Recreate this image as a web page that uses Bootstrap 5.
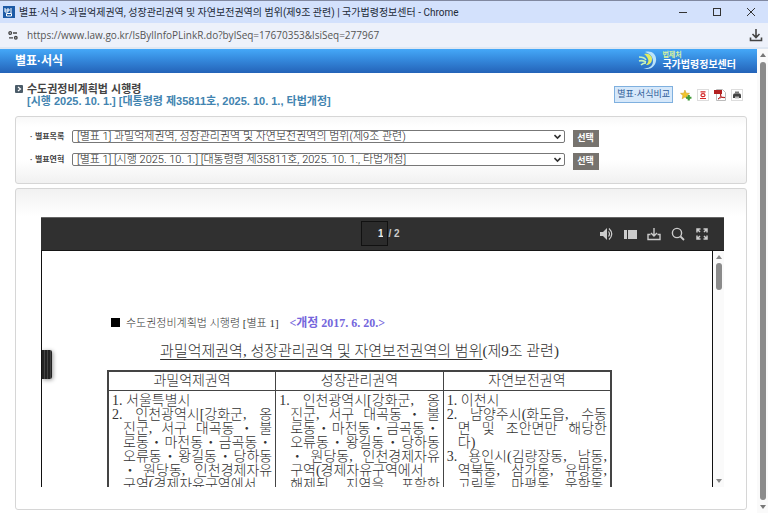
<!DOCTYPE html>
<html lang="ko">
<head>
<meta charset="utf-8">
<meta name="viewport" content="width=device-width, initial-scale=1">
<title>별표·서식 | 국가법령정보센터</title>
<link href="https://cdn.jsdelivr.net/npm/bootstrap@5.3.0/dist/css/bootstrap.min.css" rel="stylesheet">
<style>
body{font-family:"Liberation Sans","Noto Sans CJK KR",sans-serif;font-size:11px;color:#444}
svg{display:block;flex:none}
.titlebar{height:23px;background:#d3e1fc;border-top:1px solid #8088a0;color:#222a38;font-family:Roboto,"Noto Sans CJK KR",sans-serif;font-size:10px;padding:0 13px 0 3px}
.window-tools{gap:26px}
.addressbar{height:26px;background:#edf1fa;padding:0 5px 0 4px;border-bottom:2px solid #dfe7f2;font-family:"Open Sans","Noto Sans CJK KR",sans-serif}
.addressbar input{font-size:10px;color:#555;background:none;border:0;padding:0;outline:0}
.site-btn{width:18px;height:18px;border-radius:50%;background:#fff;margin-right:5px}
.plain{border:0;background:none;padding:0;line-height:1}
.masthead{height:26px;background:linear-gradient(#45a8f8,#3385d9 50%,#2463b8);padding:0 21px 0 15px;color:#fff}
.masthead h1{font-size:12px;font-weight:700}
.agency{font-size:7px;line-height:8px;color:#d9f3a0;font-weight:700}
.center-name{font-size:10px;line-height:11px;font-weight:700}
.law-head{padding:8px 0 7px}
.law-head h2{font-size:11px;line-height:12px;font-weight:700;color:#444;padding-top:2px}
.law-head p{font-size:11px;line-height:12px;font-weight:700;color:#4284b0;padding-bottom:2px}
.law-tools{gap:5px}
.main-pane{padding:0 10px 3px 15px}
.compare{font-size:9px;line-height:15px;border:1px solid #7fb0df;background:#d6e8fa;color:#2f5d98;padding:0 2px;margin-right:2px}
.panel{border:1px solid #d6d6d6;border-radius:3px}
.panel-form{background:linear-gradient(#f8f8f8,#fff 15%,#fff 65%,#f1f1f1);padding:13px 14px;margin-bottom:4px}
.panel-view{background:linear-gradient(#f1f1f1,#fff 28px);padding:28px 22px 22px 25px}
.pick{width:81%;gap:8px}
.pick + .pick{margin-top:6px}
.pick label{font-size:8px;line-height:13px;font-weight:700;width:34px;white-space:nowrap}
.pick select{height:13px;min-height:0;padding:0 16px 0 4px;font-family:Roboto,"Noto Sans CJK KR",sans-serif;font-size:11px;font-weight:300;line-height:11px;color:#222;border:1px solid #777;border-radius:2px;background-position:right 3px center;background-size:7px 7px;background-image:url("data:image/svg+xml,%3Csvg xmlns='http://www.w3.org/2000/svg' viewBox='0 0 7 7'%3E%3Cpath d='M.5 2l3 3 3-3' fill='none' stroke='%23333' stroke-width='1.6'/%3E%3C/svg%3E")}
.pick button{font-size:9px;line-height:17px;font-weight:700;background:#77736e;color:#fff;width:26px}
.toolbar{flex:none;height:34px;grid-template-columns:1fr auto 1fr;background:#303030;border-top:1px solid #666;border-bottom:1px solid #161616;color:#ccc;padding-right:15px}
.toolbar .tools{gap:10px}
.pager{font-size:10px;font-weight:700;padding-left:11px}
.pager input{width:27px;height:25px;background:#2b2b2b;border:1px solid #111;color:#eee;text-align:right;padding:0 4px 0 0;font-size:10px;font-weight:700}
.paper{border-left:1px solid #111;border-right:1px solid #111;padding:64px 100px 0 65px;font-family:"Liberation Serif","Noto Sans CJK KR",serif;color:#333;font-weight:300}
.grip{position:absolute;left:0;top:99px;width:10px;height:29px;border-radius:0 2px 2px 0;background:repeating-linear-gradient(90deg,#222 0 2px,#444 2px 3px);box-shadow:1px 1px 4px #999}
.notice{font-size:11px;line-height:16px;margin:0 0 10px 4px}
.notice b{color:#7566dc;font-size:12px;font-weight:700;margin-left:8px}
.square{width:9px;height:9px;background:#000;margin-right:6px}
.doc-title{font-size:15px;line-height:20px;font-weight:300;margin-bottom:9px;white-space:nowrap}
.doc-title u{text-underline-offset:3px;text-decoration-thickness:1px}
.zones{table-layout:fixed;width:100%;border:2px solid #444;font-size:14px;line-height:14px}
.zones th{font-weight:300;text-align:center;line-height:18px;border:1px solid #444;padding:0}
.zones td{vertical-align:top;border:1px solid #444;padding:3px 3px 40px}
.zones div{white-space:nowrap;text-align:justify;text-align-last:justify;margin-left:11px}
.zones .item{margin-left:0}
.zones .short{text-align-last:left}
.bar{flex:none;width:11px;background:#fafafa;padding:4px 0}
.thumb{width:6px;border-radius:3px;background:#8b8b8b}
.bar-outer .thumb{margin:5px 0}
.bar-inner .thumb{height:27px;margin-top:4px}
</style>
</head>
<body class="vh-100 d-flex flex-column overflow-hidden bg-white">
<header>
  <div class="titlebar d-flex align-items-center">
    <svg width="12" height="12" viewBox="0 0 12 12" class="me-1"><rect width="12" height="12" fill="#1c5aa6"/><path d="M2 2v4h3V2M2 4h3M5 4h2M8 2v5M3.500 7.500v2.500h5V7.500z" stroke="#fff" fill="none"/></svg>
    <span class="flex-fill text-nowrap">별표·서식 &gt; 과밀억제권역, 성장관리권역 및 자연보전권역의 범위(제9조 관련) | 국가법령정보센터 - Chrome</span>
    <div class="window-tools d-flex">
      <button class="plain" aria-label="최소화"><svg width="8" height="8" viewBox="0 0 8 8"><path d="M0 4.500h8" stroke="#333"/></svg></button>
      <button class="plain" aria-label="최대화"><svg width="8" height="8" viewBox="0 0 8 8"><rect x=".5" y=".5" width="7" height="7" fill="none" stroke="#333"/></svg></button>
      <button class="plain" aria-label="닫기"><svg width="8" height="8" viewBox="0 0 8 8"><path d="M0 0l8 8M8 0L0 8" stroke="#333"/></svg></button>
    </div>
  </div>
  <div class="addressbar d-flex align-items-center">
    <button class="plain site-btn d-flex align-items-center justify-content-center" aria-label="사이트 정보"><svg width="10" height="9" viewBox="0 0 10 9"><g fill="none" stroke="#444" stroke-width="1.300"><circle cx="2.200" cy="2" r="1.300"/><path d="M5 2h4M1 6.800h4"/><circle cx="7.800" cy="6.800" r="1.300"/></g></svg></button>
    <input class="flex-fill" type="text" aria-label="주소" value="https://www.law.go.kr/lsBylInfoPLinkR.do?bylSeq=17670353&amp;lsiSeq=277967">
    <button class="plain" aria-label="다운로드"><svg width="14" height="13" viewBox="0 0 14 13"><path d="M7 0v8M3.500 5L7 8.500 10.500 5M1.500 8.500v3h11v-3" stroke="#444" stroke-width="1.600" fill="none"/></svg></button>
  </div>
</header>

<div class="d-flex flex-fill overflow-hidden">
  <div class="flex-fill d-flex flex-column overflow-hidden">
    <div class="masthead d-flex align-items-center justify-content-between">
      <h1 class="m-0">별표·서식</h1>
      <div class="d-flex align-items-center">
        <svg width="20" height="20" viewBox="0 0 20 20" class="me-1"><path d="M7 1C14-1 19 4 18 10s-7 10-13 7c6 1 10-2 10-7S11 2 7 1z" fill="#b9e3fa"/><path d="M6 3c4-1 8 1 8 5s-3 6-6 6c2-2 3-4 2-6S8 4 6 3z" fill="#e2ec62"/><path d="M1 6c3 0 6 1 7 3M1 10c3-1 5 0 7 1M3 14c2-2 3-2 5-2" stroke="#c6f2b9" stroke-width="1.600" fill="none"/></svg>
        <div><div class="agency">법제처</div><div class="center-name">국가법령정보센터</div></div>
      </div>
    </div>
    <main class="main-pane flex-fill d-flex flex-column overflow-hidden">
      <div class="law-head d-flex">
        <svg width="8" height="8" viewBox="0 0 8 8" class="mt-1 me-1"><rect width="8" height="8" rx="1" fill="#4b5c69"/><path d="M3 2l2.500 2L3 6" stroke="#fff" fill="none" stroke-width="1.200"/></svg>
        <div class="flex-fill text-nowrap"><h2 class="m-0">수도권정비계획법 시행령</h2>
          <p class="m-0">[시행 2025. 10. 1.] [대통령령 제35811호, 2025. 10. 1., 타법개정]</p></div>
        <div class="law-tools d-flex align-items-center pe-1">
          <button class="compare">별표·서식비교</button>
          <button class="plain" aria-label="즐겨찾기"><svg width="12" height="12" viewBox="0 0 11 11"><path d="M4.500 1l1.200 2.800 3 .2-2.300 2 .8 3-2.700-1.600L2 9l.7-3L.5 4l3-.2z" fill="#f2c52c" stroke="#c99a1c" stroke-width=".5"/><path d="M8 5.500v5M5.500 8h5" stroke="#3f9a36" stroke-width="2"/></svg></button>
          <button class="plain" aria-label="한글 파일"><svg width="12" height="12" viewBox="0 0 12 12"><rect x=".5" y=".5" width="11" height="11" fill="#fff" stroke="#ddd"/><path d="M3.500 2.800h5M3 9.500h6" stroke="#d42626" stroke-width="1.200"/><ellipse cx="6" cy="6.200" rx="2" ry="1.500" fill="none" stroke="#d42626" stroke-width="1.200"/></svg></button>
          <button class="plain" aria-label="PDF"><svg width="12" height="12" viewBox="0 0 12 12"><path d="M2.500.5h6l3 3v8h-9z" fill="#fff" stroke="#bbb"/><rect width="8" height="4" y="1" fill="#b32020"/><path d="M4 10c3-2 3-4 2.500-5C6 8 9 9 11 8.500c-2-.5-5 0-7 1.500z" fill="none" stroke="#b32020"/></svg></button>
          <button class="plain" aria-label="인쇄"><svg width="12" height="12" viewBox="0 0 12 12"><rect x=".5" y=".5" width="11" height="11" fill="#fff" stroke="#ddd"/><path d="M4 2.500h4v2H4z" fill="#777"/><path d="M2 5.500l1-1h6l1 1v3.500H2z" fill="#444"/><path d="M4 7.500h4v2H4z" fill="#bbb"/></svg></button>
        </div>
      </div>

      <form class="panel panel-form">
        <div class="pick d-flex">
          <label for="list">· 별표목록</label>
          <select id="list" class="form-select"><option>[별표 1] 과밀억제권역, 성장관리권역 및 자연보전권역의 범위(제9조 관련)</option></select>
          <button type="button" class="plain flex-shrink-0">선택</button>
        </div>
        <div class="pick d-flex">
          <label for="history">· 별표연혁</label>
          <select id="history" class="form-select"><option>[별표 1] [시행 2025. 10. 1.] [대통령령 제35811호, 2025. 10. 1., 타법개정]</option></select>
          <button type="button" class="plain flex-shrink-0">선택</button>
        </div>
      </form>

      <section class="panel panel-view flex-fill d-flex flex-column overflow-hidden">
        <div class="toolbar d-grid align-items-center">
          <span></span>
          <div class="pager d-flex align-items-center"><input type="text" value="1" aria-label="쪽"><span>/ 2</span></div>
          <div class="tools d-flex justify-content-end">
            <button class="plain" aria-label="소리"><svg width="14" height="14" viewBox="0 0 14 14"><path d="M1 5h3l4-4v12L4 9H1z" fill="#ccc"/><path d="M9.500 4.500q2 2.500 0 5M10 1.500q5.500 5.500 0 11" stroke="#ccc" fill="none" stroke-width="1.200"/></svg></button>
            <button class="plain" aria-label="쪽 보기"><svg width="14" height="14" viewBox="0 0 14 14"><path d="M1 3h3v9H1zM5 3h9v9H5z" fill="#ccc"/></svg></button>
            <button class="plain" aria-label="내려받기"><svg width="14" height="14" viewBox="0 0 14 14"><path d="M7 1v8M4 6l3 3 3-3M3.500 7.500H1v5h12v-5h-2.500" stroke="#ccc" fill="none" stroke-width="1.400"/></svg></button>
            <button class="plain" aria-label="검색"><svg width="14" height="14" viewBox="0 0 14 14"><circle cx="6" cy="6" r="4.600" stroke="#ccc" fill="none" stroke-width="1.400"/><path d="M9.500 9.500l3.500 3.500" stroke="#ccc" stroke-width="1.800"/></svg></button>
            <button class="plain" aria-label="전체 화면"><svg width="14" height="14" viewBox="0 0 14 14"><path d="M2 5.500V2h3.500M8.500 2H12v3.500M2 8.500V12h3.500M12 8.500V12H8.500M2 2l3 3M12 2L9 5M2 12l3-3M12 12L9 9" stroke="#ccc" stroke-width="1.500" fill="none"/></svg></button>
          </div>
        </div>
        <div class="flex-fill d-flex overflow-hidden">
          <article class="paper flex-fill position-relative overflow-hidden">
            <div class="grip"></div>
            <p class="notice d-flex align-items-center text-nowrap"><span class="square"></span><span>수도권정비계획법 시행령 [별표 1] <b>&lt;개정 2017. 6. 20.&gt;</b></span></p>
            <h3 class="doc-title text-center"><u>과밀억제권역, 성장관리권역 및 자연보전권역의 범위</u>(제9조 관련)</h3>
            <table class="zones">
              <thead><tr><th>과밀억제권역</th><th>성장관리권역</th><th>자연보전권역</th></tr></thead>
              <tbody><tr>
                <td>
                  <div class="item short">1. 서울특별시</div>
                  <div class="item">2. 인천광역시[강화군, 옹</div>
                  <div>진군, 서구 대곡동・불</div>
                  <div>로동・마전동・금곡동・</div>
                  <div>오류동・왕길동・당하동</div>
                  <div>・원당동, 인천경제자유</div>
                  <div>구역(경제자유구역에서</div>
                </td>
                <td>
                  <div class="item">1. 인천광역시[강화군, 옹</div>
                  <div>진군, 서구 대곡동・불</div>
                  <div>로동・마전동・금곡동・</div>
                  <div>오류동・왕길동・당하동</div>
                  <div>・원당동, 인천경제자유</div>
                  <div>구역(경제자유구역에서</div>
                  <div>해제된 지역을 포함한</div>
                </td>
                <td>
                  <div class="item short">1. 이천시</div>
                  <div class="item">2. 남양주시(화도읍, 수동</div>
                  <div>면 및 조안면만 해당한</div>
                  <div class="short">다)</div>
                  <div class="item">3. 용인시(김량장동, 남동,</div>
                  <div>역북동, 삼가동, 유방동,</div>
                  <div>고림동, 마평동, 운학동,</div>
                </td>
              </tr></tbody>
            </table>
          </article>
          <div class="bar bar-inner d-flex flex-column align-items-center">
            <svg width="6" height="4" viewBox="0 0 6 4"><path d="M0 4l3-4 3 4z" fill="#888"/></svg>
            <div class="thumb"></div>
            <svg width="6" height="4" viewBox="0 0 6 4" class="mt-auto"><path d="M0 0l3 4 3-4z" fill="#888"/></svg>
          </div>
        </div>
      </section>
    </main>
  </div>
  <div class="bar bar-outer d-flex flex-column align-items-center">
    <svg width="6" height="4" viewBox="0 0 6 4"><path d="M0 4l3-4 3 4z" fill="#777"/></svg>
    <div class="thumb flex-fill"></div>
    <svg width="6" height="4" viewBox="0 0 6 4"><path d="M0 0l3 4 3-4z" fill="#777"/></svg>
  </div>
</div>
<script src="https://cdn.jsdelivr.net/npm/bootstrap@5.3.0/dist/js/bootstrap.bundle.min.js"></script>
</body>
</html>
